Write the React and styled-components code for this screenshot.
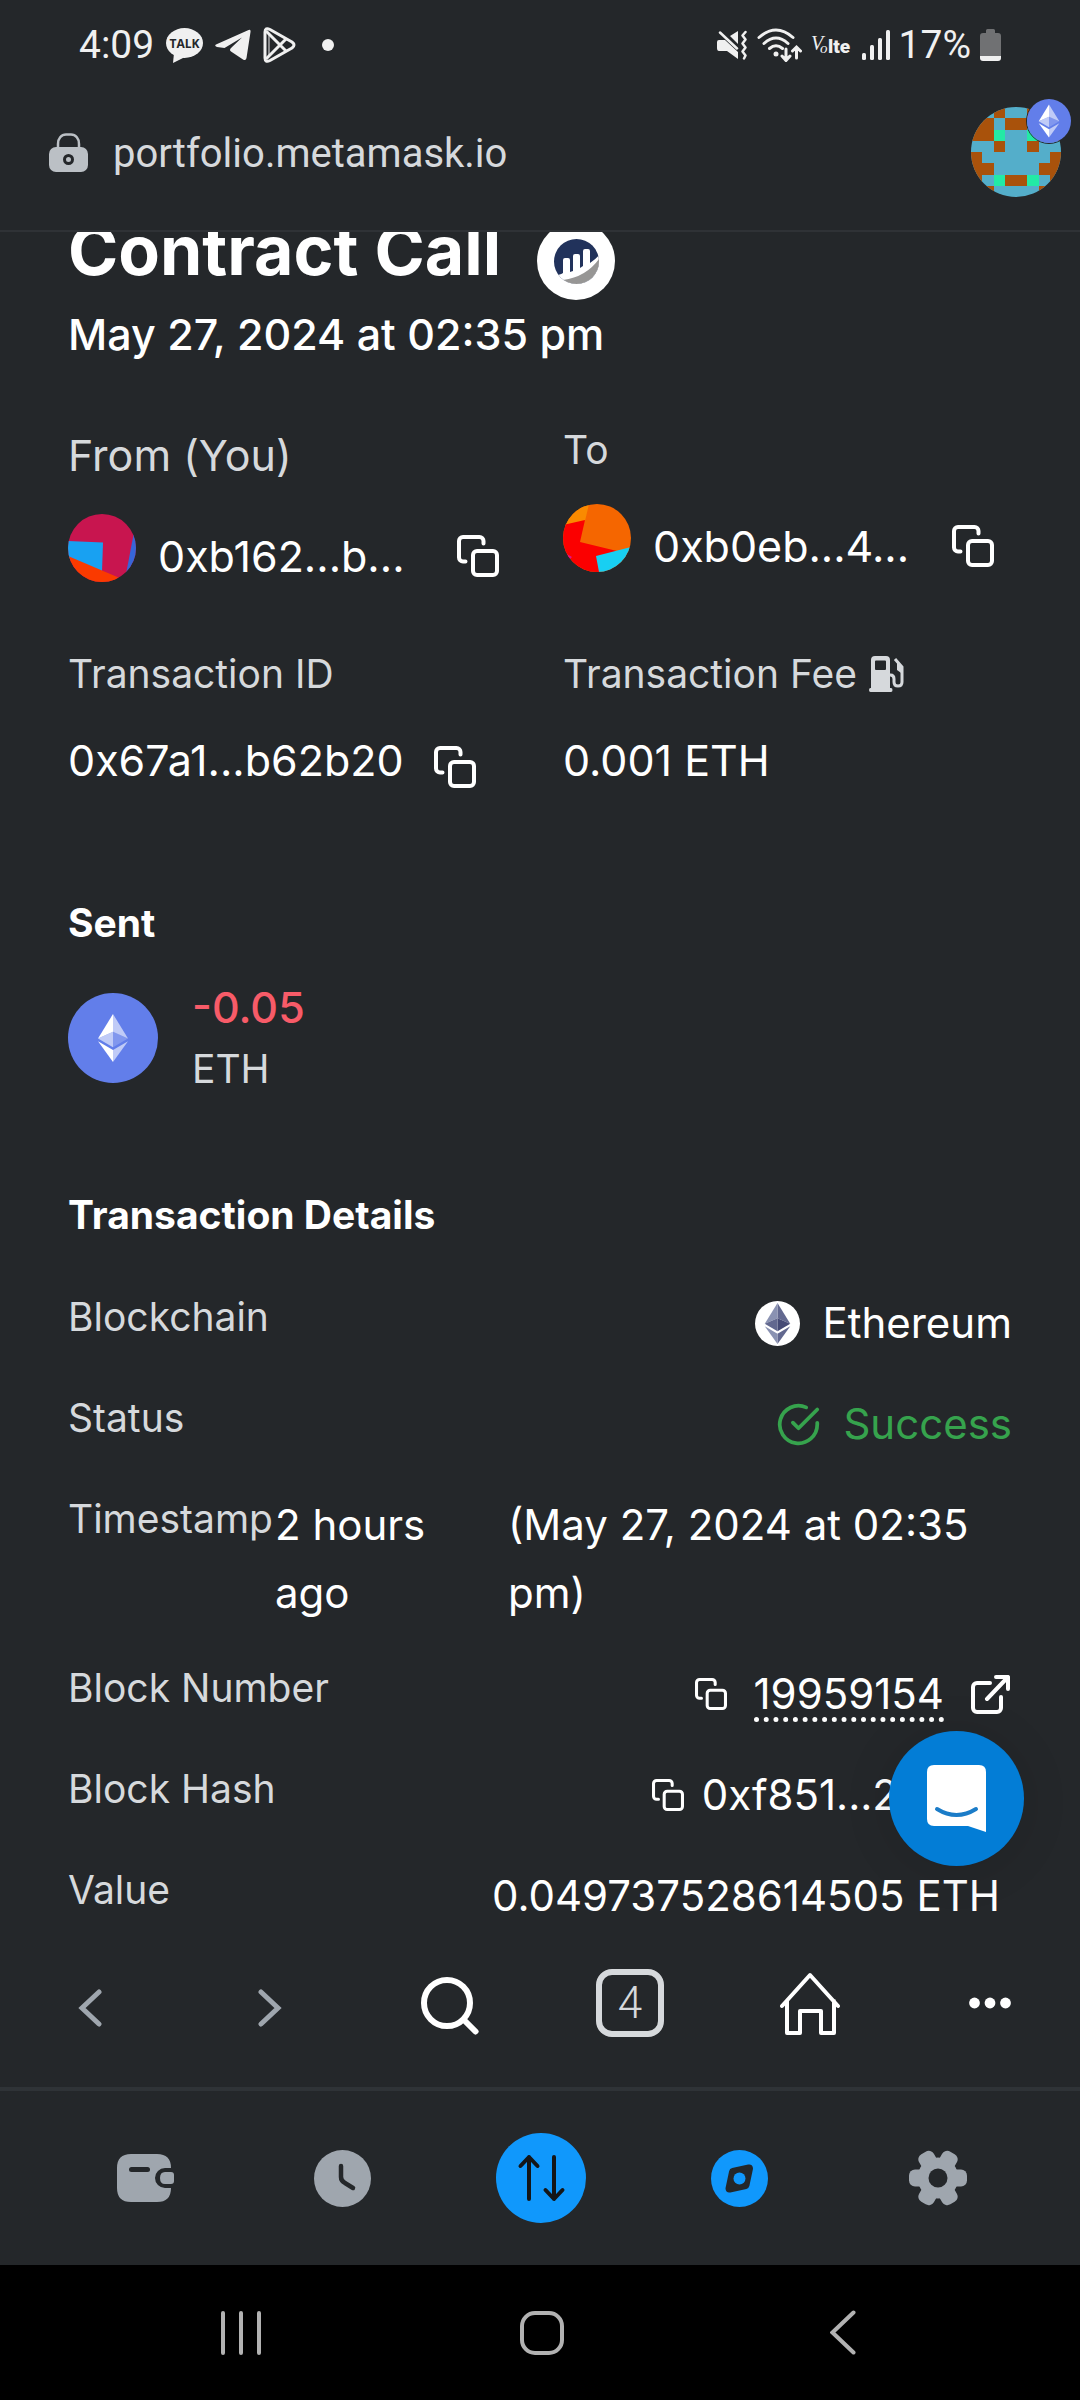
import React from 'react';
import styled, { createGlobalStyle } from 'styled-components';

const GlobalStyle = createGlobalStyle`
  * {
    box-sizing: border-box;
  }
  body {
    margin: 0;
    background-color: #24272a;
  }
  h1, h2, p, dl, dd {
    margin: 0;
  }
  svg {
    display: block;
    flex-shrink: 0;
  }
`;

const Page = styled.div`
  display: flex;
  flex-direction: column;
  height: 100vh;
  background-color: #24272a;
  color: #ffffff;
  font-family: Inter, 'Liberation Sans', sans-serif;
`;

const StatusBar = styled.header`
  display: flex;
  justify-content: space-between;
  align-items: center;
  height: 76px;
  padding: 14px 79px 0;
  color: #f0f0f0;
  font-family: Roboto, sans-serif;
  font-size: 39px;
  line-height: 48px;
`;

const StatusGroup = styled.div`
  display: flex;
  align-items: center;
  gap: ${({ $gap }) => $gap}px;
`;

const Dot = styled.span`
  width: 12px;
  height: 12px;
  margin-left: 14px;
  border-radius: 50%;
  background-color: #f0f0f0;
`;

const AddressBar = styled.div`
  display: flex;
  align-items: center;
  height: 156px;
  padding: 0 19px 2px 49px;
  border-bottom: 2px solid #2f3236;
`;

const Url = styled.p`
  flex: 1;
  padding: 4px 0 0 25px;
  color: #d6d9dc;
  font-family: Roboto, sans-serif;
  font-size: 40px;
  line-height: 48px;
`;

const IconButton = styled.button`
  display: flex;
  flex-shrink: 0;
  justify-content: center;
  align-items: center;
  padding: 0;
  border: 0;
  background: none;
  color: #ffffff;
  font: inherit;
`;

const AccountButton = styled(IconButton)`
  position: relative;
`;

const NetworkBadge = styled.span`
  position: absolute;
  top: -9px;
  right: -11px;
  border: 1px solid #24272a;
  border-radius: 50%;
`;

const Main = styled.main`
  position: relative;
  flex: 1;
  min-height: 0;
  overflow: hidden;
`;

const Content = styled.div`
  margin-top: -22px;
  padding: 0 68px;
`;

const TitleRow = styled.div`
  display: flex;
  align-items: flex-start;
  gap: 36px;
`;

const Title = styled.h1`
  font-size: 68px;
  font-weight: 700;
  line-height: 80px;
`;

const ExplorerLogo = styled.a`
  display: flex;
  justify-content: center;
  align-items: center;
  width: 78px;
  height: 78px;
  margin-top: 12px;
  border-radius: 50%;
  background-color: #ffffff;
`;

const DateLine = styled.p`
  font-size: 43px;
  font-weight: 500;
  line-height: 68px;
`;

const Summary = styled.dl`
  display: grid;
  grid-template-columns: 1fr 1fr;
  gap: 54px 46px;
  margin-top: 52px;
`;

const Label = styled.dt`
  display: flex;
  align-items: center;
  gap: 12px;
  color: #d6d9dc;
  font-size: ${({ $large }) => ($large ? 43 : 39)}px;
  line-height: ${({ $large }) => ($large ? 70 : 60)}px;
`;

const Account = styled.dd`
  display: flex;
  gap: 22px;
  margin-top: 24px;
`;

const AccountText = styled.div`
  display: flex;
  flex: 1;
  justify-content: space-between;
  align-items: center;
  height: 68px;
  margin-top: 8px;
  padding-right: 18px;
  font-size: 43px;
`;

const SummaryValue = styled.dd`
  display: flex;
  align-items: flex-end;
  gap: 30px;
  margin-top: 22px;
  font-size: 43px;
  line-height: 68px;

  button {
    margin-bottom: 6px;
  }
`;

const SectionTitle = styled.h2`
  margin-top: ${({ $top }) => $top}px;
  font-size: 39px;
  font-weight: 700;
  line-height: 62px;
`;

const Asset = styled.div`
  display: flex;
  align-items: center;
  gap: 34px;
  margin-top: 22px;
  line-height: 62px;
`;

const Amount = styled.p`
  color: #f75b68;
  font-size: 43px;
  font-weight: 500;
`;

const Token = styled.p`
  color: #d6d9dc;
  font-size: 39px;
`;

const Details = styled.dl`
  display: flex;
  flex-direction: column;
  gap: 33px;
  margin-top: 43px;
`;

const DetailRow = styled.div`
  display: flex;
  justify-content: space-between;
  align-items: flex-start;
`;

const DetailLabel = styled.dt`
  color: #d6d9dc;
  font-size: 39px;
  line-height: 56px;
`;

const DetailValue = styled.dd`
  display: flex;
  align-items: center;
  gap: ${({ $gap }) => $gap || 22}px;
  min-height: 68px;
  padding-right: ${({ $inset }) => $inset || 0}px;
  color: ${({ $success }) => ($success ? '#36a34d' : '#ffffff')};
  font-size: 42px;
  line-height: 68px;
  white-space: nowrap;
`;

const Timestamp = styled.dd`
  display: grid;
  grid-template-columns: 210px 1fr;
  flex: 0 0 737px;
  gap: 23px;
  font-size: 42px;
  line-height: 68px;
`;

const BlockLink = styled.a`
  margin-top: 4px;
  border-bottom: 5px dotted #ffffff;
  color: #ffffff;
  line-height: 46px;
  text-decoration: none;
`;

const ChatButton = styled.button`
  position: absolute;
  right: 56px;
  bottom: 53px;
  display: flex;
  justify-content: center;
  align-items: center;
  width: 135px;
  height: 135px;
  padding: 0;
  border: 0;
  border-radius: 50%;
  background-color: #037dd6;
  box-shadow: 0 4px 48px rgba(0, 0, 0, 0.12);
`;

const BrowserBar = styled.nav`
  display: grid;
  grid-template-columns: repeat(6, 1fr);
  height: 168px;
`;

const TabCount = styled.span`
  display: flex;
  justify-content: center;
  align-items: center;
  width: 68px;
  height: 68px;
  border: 6px solid #d6d9dc;
  border-radius: 16px;
  color: #d6d9dc;
  font-family: Roboto, sans-serif;
  font-size: 44px;
  font-weight: 300;
`;

const AppBar = styled.nav`
  display: grid;
  grid-template-columns: repeat(5, 1fr);
  height: 178px;
  padding: 0 43px 0 45px;
  border-top: 4px solid #2f3337;
`;

const SystemBar = styled.nav`
  display: grid;
  grid-template-columns: repeat(3, 1fr);
  height: 135px;
  padding: 0 86px 0 90px;
  background-color: #000000;
`;

const blockie = [
  '.bobbobb',
  'oobooboo',
  'oogbbgoo',
  'bbobbobb',
  'obbbbbbo',
  'oobbbboo',
  'obgoogbo',
  'bobbbbob',
];

const blockieColors = { o: '#a9520b', g: '#23eaa5' };

const Blockie = () => (
  <svg width="90" height="90" viewBox="0 0 8 8">
    <clipPath id="blockie">
      <circle cx="4" cy="4" r="4" />
    </clipPath>
    <g clipPath="url(#blockie)" shapeRendering="crispEdges">
      <rect width="8" height="8" fill="#54aeca" />
      {blockie.map((line, y) =>
        line.split('').map((cell, x) =>
          blockieColors[cell] ? (
            <rect key={`${x}-${y}`} x={x} y={y} width="1" height="1" fill={blockieColors[cell]} />
          ) : null
        )
      )}
    </g>
  </svg>
);

const Coin = styled.svg`
  border-radius: 50%;
  background-color: #627eea;
`;

const EthCoin = ({ size, viewBox }) => (
  <Coin width={size} height={size} viewBox={viewBox}>
    <g fill="#ffffff">
      <path fillOpacity=".6" d="M16.5 4v8.87l7.5 3.35z" />
      <path d="M16.5 4L9 16.22l7.5-3.35z" />
      <path fillOpacity=".6" d="M16.5 21.97v6.03L24 17.62z" />
      <path d="M16.5 28v-6.03L9 17.62z" />
      <path fillOpacity=".2" d="M16.5 20.57l7.5-4.35-7.5-3.35z" />
      <path fillOpacity=".6" d="M9 16.22l7.5 4.35v-7.7z" />
    </g>
  </Coin>
);

const EthMark = () => (
  <svg width="45" height="45" viewBox="3.25 2.75 26.5 26.5">
    <circle cx="16.5" cy="16" r="13.25" fill="#ffffff" />
    <path fill="#62688f" d="M16.5 4v8.87l7.5 3.35z" />
    <path fill="#8a92b2" d="M16.5 4L9 16.22l7.5-3.35z" />
    <path fill="#62688f" d="M16.5 21.97v6.03L24 17.62z" />
    <path fill="#8a92b2" d="M16.5 28v-6.03L9 17.62z" />
    <path fill="#454a75" d="M16.5 20.57l7.5-4.35-7.5-3.35z" />
    <path fill="#62688f" d="M9 16.22l7.5 4.35v-7.7z" />
  </svg>
);

const CopyIcon = ({ size = 42 }) => (
  <svg width={size} height={size} viewBox="0 0 42 42" fill="none" stroke="currentColor" strokeWidth="4" strokeLinecap="round">
    <rect x="16" y="16" width="24" height="24" rx="4" />
    <path d="M26.5 8.5V6a4 4 0 0 0-4-4H6a4 4 0 0 0-4 4v16.5a4 4 0 0 0 4 4h2.5" />
  </svg>
);

const CopyButton = ({ size }) => (
  <IconButton type="button" aria-label="Copy">
    <CopyIcon size={size} />
  </IconButton>
);

const FromAvatar = () => (
  <svg width="68" height="68" viewBox="0 0 68 68">
    <clipPath id="from">
      <circle cx="34" cy="34" r="34" />
    </clipPath>
    <g clipPath="url(#from)">
      <rect width="68" height="68" fill="#c8154f" />
      <path fill="#3766d8" d="M66 18l-8 42h12V18z" />
      <path fill="#18a1f2" d="M0 27l35 1.5-1 29L0 44z" />
      <path fill="#fa3a00" d="M0 42l54 23v4H0z" />
    </g>
  </svg>
);

const ToAvatar = () => (
  <svg width="68" height="68" viewBox="0 0 68 68">
    <clipPath id="to">
      <circle cx="34" cy="34" r="34" />
    </clipPath>
    <g clipPath="url(#to)">
      <rect width="68" height="68" fill="#f56600" />
      <path fill="#fa8a00" d="M26 0l-4 17L0 22V0z" />
      <path fill="#fb0000" d="M0 21l22-5-5 22 37 9-18 21H0z" />
      <path fill="#18cff2" d="M33 52l35-9v25H36z" />
      <path fill="#e0148c" d="M2 49l7 4-3 3z" />
    </g>
  </svg>
);

const StatusIcons = () => (
  <>
    <svg width="37" height="35" viewBox="0 0 37 35">
      <ellipse cx="18.5" cy="15" rx="18.5" ry="15" fill="#f0f0f0" />
      <path d="M8 25l-1 10 12-6z" fill="#f0f0f0" />
      <text x="18.5" y="20" textAnchor="middle" fontFamily="Open Sans" fontSize="12" fontWeight="700" fill="#24272a">TALK</text>
    </svg>
    <svg width="36" height="32" viewBox="0 0 36 32" fill="#f0f0f0">
      <path d="M1 15.5L33 1.2Q36 0 35.5 3L31.5 29Q31 32 28 30.5L16 22.5Q14 21 16 19L27 8.5L9.5 19L2 18Q-1 17 1 15.5Z" />
    </svg>
    <svg width="33" height="36" viewBox="0 0 33 36" fill="none" stroke="#f0f0f0" strokeWidth="3" strokeLinejoin="round">
      <path d="M2 5Q2 0 7 2.5L29 15Q33 18 29 21L7 33.5Q2 36 2 31Z" />
      <path d="M3 4l20 20M3 32l20-20" />
      <path d="M6 8v20" strokeWidth="1" />
    </svg>
    <Dot />
  </>
);

const MuteIcon = () => (
  <svg width="31" height="30" viewBox="0 0 31 30">
    <path fill="#f0f0f0" d="M0 12q0-2 2-2h6l13 12v7L10 21H2q-2 0-2-3zM13 6l8-5v13z" />
    <path fill="none" stroke="#f0f0f0" strokeWidth="2.5" strokeLinecap="round" strokeLinejoin="round" d="M3 2.5l17 16M28.5 2l-3 3.5 3 4-3 4 3 4-3 4 3 4-1.5 3" />
  </svg>
);

const WifiIcon = () => (
  <svg width="45" height="34" viewBox="0 0 45 34" fill="none" stroke="#f0f0f0" strokeWidth="3" strokeLinecap="round">
    <path d="M2 9.5Q19-5.5 36 9.5M7 15.5Q19 4.500 31 15.5M12.5 20.5Q19 15 25.5 20.5" />
    <circle cx="19" cy="26" r="2.5" fill="#f0f0f0" stroke="none" />
    <path d="M29 21v11M25 28l4 4.5 4-4.5M39.5 30V19.5M35.5 23l4-4 4 4" />
  </svg>
);

const VolteIcon = () => (
  <svg width="42" height="24" viewBox="0 0 42 24" fill="#f0f0f0">
    <text x="0" y="17" fontFamily="Liberation Serif" fontSize="20" fontStyle="italic">V</text>
    <text x="9" y="20" fontFamily="Liberation Serif" fontSize="15" fontStyle="italic">o</text>
    <text x="17" y="20" fontFamily="Roboto" fontSize="19" fontWeight="900">lte</text>
  </svg>
);

const SignalIcon = () => (
  <svg width="28" height="30" viewBox="0 0 28 30" fill="#f0f0f0">
    <rect x="0" y="23" width="4" height="7" rx="1.5" />
    <rect x="8" y="15" width="4" height="15" rx="1.5" />
    <rect x="16" y="8" width="4" height="22" rx="1.5" />
    <rect x="24" y="0" width="4" height="30" rx="1.5" />
  </svg>
);

const BatteryIcon = () => (
  <svg width="21" height="32" viewBox="0 0 21 32">
    <path fill="#707173" d="M6 4V1.5Q6 0 7.5 0h6Q15 0 15 1.5V4h3q3 0 3 3v20H0V7q0-3 3-3z" />
    <path fill="#f0f0f0" d="M0 27h21v2q0 3-3 3H3q-3 0-3-3z" />
  </svg>
);

const LockIcon = () => (
  <svg width="39" height="39" viewBox="0 0 39 39">
    <path d="M9 16V11a8 9 0 0 1 8-9.500h5a8 9 0 0 1 8 9.500v5" fill="none" stroke="#bbc0c5" strokeWidth="2.5" />
    <rect y="14" width="39" height="25" rx="7" fill="#bbc0c5" />
    <circle cx="19.5" cy="26.5" r="4" fill="none" stroke="#24272a" strokeWidth="3" />
  </svg>
);

const ExplorerIcon = () => (
  <svg width="45" height="45" viewBox="0 0 45 45">
    <clipPath id="scan">
      <circle cx="22.5" cy="22.5" r="22.5" />
    </clipPath>
    <g clipPath="url(#scan)">
      <rect width="45" height="45" fill="#21325b" />
      <path fill="#ffffff" d="M4 36Q8 35 9 34V21q0-2 2-2h3q2 0 2 2v12l3-1V17q0-2 2-2h3q2 0 2 2v12l3-2V12q0-2 2-2h3q2 0 2 2v12q6-4 10-9v31H0z" />
      <path fill="#979695" d="M9 41Q32 38 45 20V45H9z" />
    </g>
  </svg>
);

const GasIcon = () => (
  <svg width="35" height="36" viewBox="0 0 35 36">
    <path fill="#d6d9dc" fillRule="evenodd" d="M2 4q0-4 4-4h11q4 0 4 4v28h1q1.5 0 1.5 2t-1.5 2H1.5Q0 36 0 34t1.5-2H2zM7 4.5q-1 0-1 1V13q0 1 1 1h9q1 0 1-1V5.5q0-1-1-1z" />
    <path fill="none" stroke="#d6d9dc" strokeWidth="3" d="M20 19h1.5q3.5 0 3.5 4v3q0 4 4 4t4-4V11L26 3" />
    <path fill="#d6d9dc" d="M26 3l7.5 8v7L28 14V7z" />
  </svg>
);

const SuccessIcon = () => (
  <svg width="45" height="45" viewBox="0 0 24 24" fill="none" stroke="currentColor" strokeWidth="2" strokeLinecap="round" strokeLinejoin="round">
    <path d="M22 11.08V12a10 10 0 1 1-5.93-9.14" />
    <path d="M22 4L12 14.01l-3-3" />
  </svg>
);

const ExternalIcon = () => (
  <svg width="39" height="39" viewBox="0 0 39 39" fill="none" stroke="#ffffff" strokeWidth="4" strokeLinecap="round" strokeLinejoin="round">
    <path d="M19 8H6a4 4 0 0 0-4 4v21a4 4 0 0 0 4 4h20a4 4 0 0 0 4-4V22M25 2h12v12M37 2L16 24" />
  </svg>
);

const ChatIcon = () => (
  <svg width="59" height="67" viewBox="0 0 59 67">
    <path fill="#ffffff" d="M7 0h45q7 0 7 7v60l-18-6H7q-7 0-7-7V7q0-7 7-7z" />
    <path fill="none" stroke="#1b7cc8" strokeWidth="4" strokeLinecap="round" d="M10 44Q29.5 56 49 44" />
  </svg>
);

const Chevron = ({ flip }) => (
  <svg width="24" height="48" viewBox="0 -10 24 48" fill="none" stroke="#9fa6ae" strokeWidth="5" strokeLinecap="round">
    <path d={flip ? 'M3 3l17 16L3 35' : 'M21 3L4 19l17 16'} />
  </svg>
);

const SearchIcon = () => (
  <svg width="58" height="64" viewBox="0 -6 58 64" fill="none" stroke="#ffffff" strokeWidth="6" strokeLinecap="round">
    <circle cx="26" cy="26" r="23" />
    <path d="M43 43l11.5 11.5" />
  </svg>
);

const HomeIcon = () => (
  <svg width="62" height="66" viewBox="0 -2 62 66" fill="none" stroke="#ffffff" strokeWidth="4" strokeLinecap="round" strokeLinejoin="round">
    <path d="M3 34L31 3l28 31M8 29v32h13V39h21v22h13V29" />
  </svg>
);

const MoreIcon = () => (
  <svg width="42" height="12" viewBox="0 0 42 12" fill="#ffffff">
    <circle cx="5.5" cy="6" r="5.4" />
    <circle cx="21" cy="6" r="5.4" />
    <circle cx="36.5" cy="6" r="5.4" />
  </svg>
);

const WalletIcon = () => (
  <svg width="62" height="48" viewBox="-4 0 62 48">
    <path fill="#9fa6ae" d="M14 0h26q14 0 14 14h-6a10 10 0 0 0 0 20h6q0 14-14 14H14Q0 48 0 34V14Q0 0 14 0z" />
    <path fill="#9fa6ae" d="M48 18h6q3 0 3 3v6q0 3-3 3h-6q-5 0-5-6t5-6z" />
    <path stroke="#24272a" strokeWidth="5" strokeLinecap="round" d="M14.5 15.5h16" />
  </svg>
);

const ClockIcon = () => (
  <svg width="57" height="57" viewBox="0 0 57 57">
    <circle cx="28.5" cy="28.5" r="28.5" fill="#9fa6ae" />
    <path fill="none" stroke="#24272a" strokeWidth="4.5" strokeLinecap="round" d="M27 16v11q0 4 4 6l8 5" />
  </svg>
);

const SwapIcon = () => (
  <svg width="90" height="90" viewBox="0 0 90 90">
    <circle cx="45" cy="45" r="45" fill="#1098fc" />
    <path fill="none" stroke="#141618" strokeWidth="4" strokeLinecap="round" strokeLinejoin="round" d="M33 66V24M24.5 33l8.5-9 8.5 9M58 24v42M49.5 57l8.5 9 8.5-9" />
  </svg>
);

const CompassIcon = () => (
  <svg width="57" height="57" viewBox="0 0 57 57">
    <circle cx="28.5" cy="28.5" r="28.5" fill="#1098fc" />
    <path fill="#24272a" stroke="#24272a" strokeWidth="8" strokeLinejoin="round" d="M22 22l16-3.5-3.5 16.5L18.5 38.500z" />
    <circle cx="28.5" cy="28.5" r="6" fill="#1098fc" />
  </svg>
);

const GearIcon = () => (
  <svg width="58" height="58" viewBox="-29 -29 58 58">
    <g fill="#9fa6ae">
      <circle r="20.5" />
      {[0, 60, 120].map((angle) => (
        <rect key={angle} x="-29" y="-8.5" width="58" height="17" rx="6" transform={`rotate(${angle})`} />
      ))}
    </g>
    <circle r="9.5" fill="#24272a" />
  </svg>
);

const RecentsIcon = () => (
  <svg width="40" height="44" viewBox="0 0 40 44" stroke="#b2b2b2" strokeWidth="4" strokeLinecap="round">
    <path d="M2 2v40M20 2v40M38 2v40" />
  </svg>
);

const SystemHomeIcon = () => (
  <svg width="44" height="44" viewBox="0 0 44 44" fill="none" stroke="#b2b2b2" strokeWidth="4">
    <rect x="2" y="2" width="40" height="40" rx="13" />
  </svg>
);

const SystemBackIcon = () => (
  <svg width="26" height="45" viewBox="0 0 26 45" fill="none" stroke="#b2b2b2" strokeWidth="4" strokeLinecap="round">
    <path d="M23.5 2.5l-21 20 21 20" />
  </svg>
);

const App = () => (
  <Page>
    <GlobalStyle />
    <StatusBar>
      <StatusGroup $gap={12}>
        <span>4:09</span>
        <StatusIcons />
      </StatusGroup>
      <StatusGroup $gap={9}>
        <MuteIcon />
        <WifiIcon />
        <VolteIcon />
        <SignalIcon />
        <span>17%</span>
        <BatteryIcon />
      </StatusGroup>
    </StatusBar>

    <AddressBar>
      <LockIcon />
      <Url>portfolio.metamask.io</Url>
      <AccountButton type="button" aria-label="Account">
        <Blockie />
        <NetworkBadge>
          <EthCoin size={44} viewBox="0.5 0 32 32" />
        </NetworkBadge>
      </AccountButton>
    </AddressBar>

    <Main>
      <Content>
        <TitleRow>
          <Title>Contract Call</Title>
          <ExplorerLogo href="#explorer" aria-label="View on explorer">
            <ExplorerIcon />
          </ExplorerLogo>
        </TitleRow>
        <DateLine>May 27, 2024 at 02:35 pm</DateLine>

        <Summary>
          <div>
            <Label $large>From (You)</Label>
            <Account>
              <FromAvatar />
              <AccountText>
                <span>0xb162...b...</span>
                <CopyButton />
              </AccountText>
            </Account>
          </div>
          <div>
            <Label>To</Label>
            <Account>
              <ToAvatar />
              <AccountText>
                <span>0xb0eb...4...</span>
                <CopyButton />
              </AccountText>
            </Account>
          </div>
          <div>
            <Label>Transaction ID</Label>
            <SummaryValue>
              <span>0x67a1...b62b20</span>
              <CopyButton />
            </SummaryValue>
          </div>
          <div>
            <Label>
              Transaction Fee
              <GasIcon />
            </Label>
            <SummaryValue>0.001 ETH</SummaryValue>
          </div>
        </Summary>

        <SectionTitle $top={98}>Sent</SectionTitle>
        <Asset>
          <EthCoin size={90} viewBox="-6 -6.5 45 45" />
          <div>
            <Amount>-0.05</Amount>
            <Token>ETH</Token>
          </div>
        </Asset>

        <SectionTitle $top={84}>Transaction Details</SectionTitle>
        <Details>
          <DetailRow>
            <DetailLabel>Blockchain</DetailLabel>
            <DetailValue>
              <EthMark />
              Ethereum
            </DetailValue>
          </DetailRow>
          <DetailRow>
            <DetailLabel>Status</DetailLabel>
            <DetailValue $success>
              <SuccessIcon />
              Success
            </DetailValue>
          </DetailRow>
          <DetailRow>
            <DetailLabel>Timestamp</DetailLabel>
            <Timestamp>
              <span>2 hours ago</span>
              <span>(May 27, 2024 at 02:35 pm)</span>
            </Timestamp>
          </DetailRow>
          <DetailRow>
            <DetailLabel>Block Number</DetailLabel>
            <DetailValue $gap={27} $inset={2}>
              <CopyButton size={32} />
              <BlockLink href="#block">19959154</BlockLink>
              <ExternalIcon />
            </DetailValue>
          </DetailRow>
          <DetailRow>
            <DetailLabel>Block Hash</DetailLabel>
            <DetailValue $gap={18} $inset={114}>
              <CopyButton size={32} />
              0xf851...2
            </DetailValue>
          </DetailRow>
          <DetailRow>
            <DetailLabel>Value</DetailLabel>
            <DetailValue $inset={12}>0.049737528614505 ETH</DetailValue>
          </DetailRow>
        </Details>
      </Content>
      <ChatButton type="button" aria-label="Open chat">
        <ChatIcon />
      </ChatButton>
    </Main>

    <BrowserBar>
      <IconButton type="button" aria-label="Back">
        <Chevron />
      </IconButton>
      <IconButton type="button" aria-label="Forward">
        <Chevron flip />
      </IconButton>
      <IconButton type="button" aria-label="Search">
        <SearchIcon />
      </IconButton>
      <IconButton type="button" aria-label="Tabs">
        <TabCount>4</TabCount>
      </IconButton>
      <IconButton type="button" aria-label="Home">
        <HomeIcon />
      </IconButton>
      <IconButton type="button" aria-label="More">
        <MoreIcon />
      </IconButton>
    </BrowserBar>

    <AppBar>
      <IconButton type="button" aria-label="Wallet">
        <WalletIcon />
      </IconButton>
      <IconButton type="button" aria-label="Activity">
        <ClockIcon />
      </IconButton>
      <IconButton type="button" aria-label="Actions">
        <SwapIcon />
      </IconButton>
      <IconButton type="button" aria-label="Browser">
        <CompassIcon />
      </IconButton>
      <IconButton type="button" aria-label="Settings">
        <GearIcon />
      </IconButton>
    </AppBar>

    <SystemBar>
      <IconButton type="button" aria-label="Recent apps">
        <RecentsIcon />
      </IconButton>
      <IconButton type="button" aria-label="Home screen">
        <SystemHomeIcon />
      </IconButton>
      <IconButton type="button" aria-label="Previous screen">
        <SystemBackIcon />
      </IconButton>
    </SystemBar>
  </Page>
);

export default App;
